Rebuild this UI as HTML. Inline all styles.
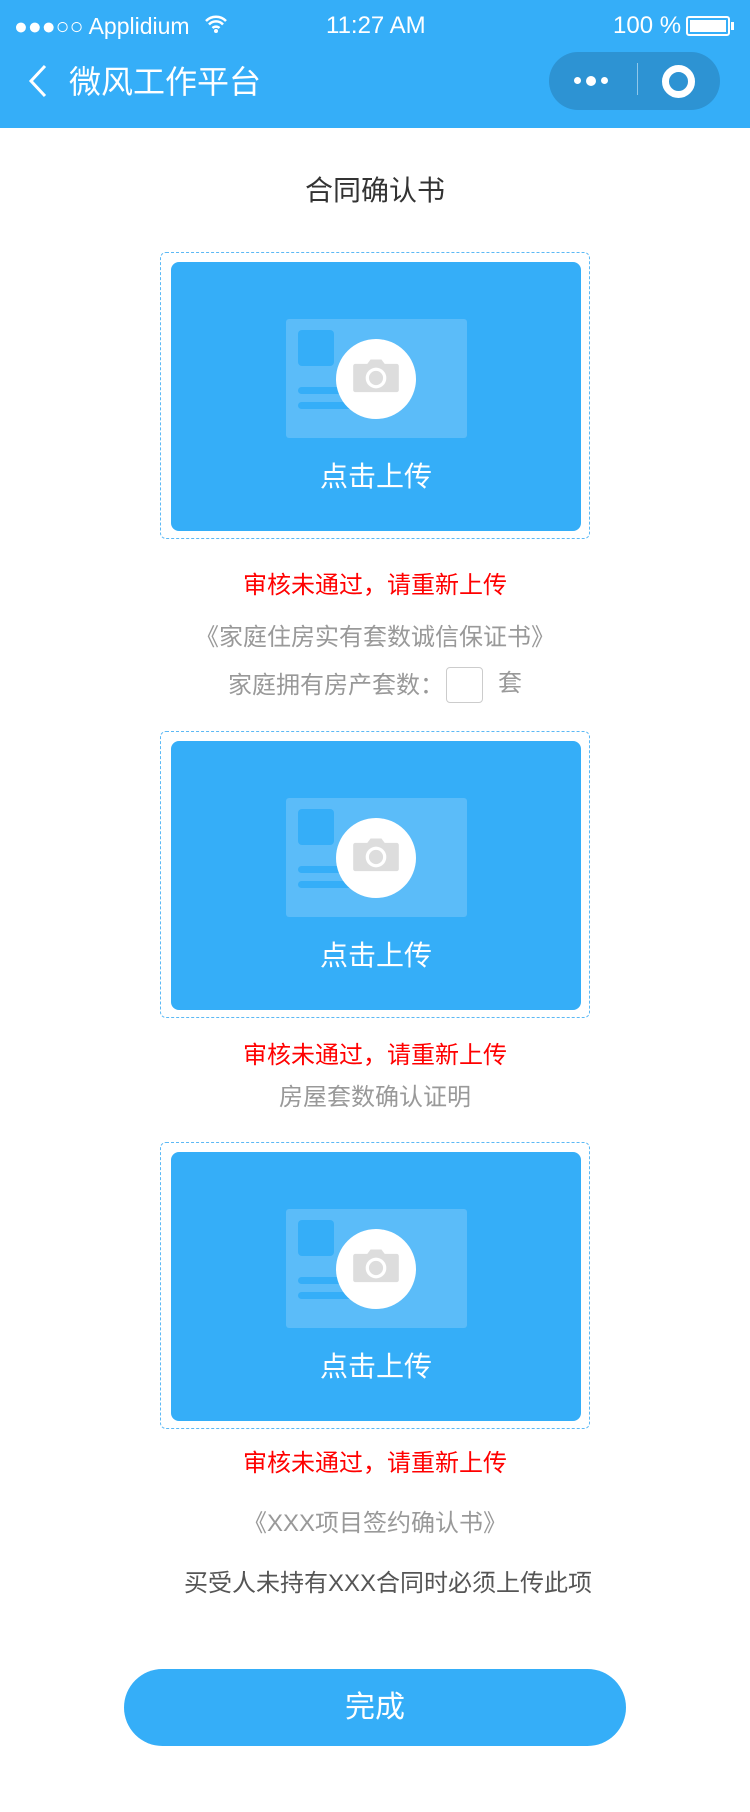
<!DOCTYPE html>
<html><head><meta charset="utf-8"><style>
*{margin:0;padding:0;box-sizing:border-box}
body{width:750px;height:1812px;background:#fff;position:relative;overflow:hidden;font-family:"Liberation Sans","Noto Sans CJK SC",sans-serif}
.abs{position:absolute}
.nav{left:0;top:0;width:750px;height:128px;background:#35aef8;color:#fff}
.c{left:0;width:750px;text-align:center;line-height:1}
.dash{left:160px;width:430px;height:287px;border:1.5px dashed #5cb9f5;border-radius:6px}
.blue{left:10px;top:9px;width:410px;height:269px;background:#35aef8;border-radius:8px}
.red{color:#f00;font-size:24px}
.gray{color:#999;font-size:24px}
</style></head><body>
<div class="abs nav">
  <div class="abs" style="left:14px;top:13px;font-size:23px;letter-spacing:0">●●●○○ Applidium</div>
  <svg class="abs" style="left:204px;top:14px" width="24" height="20" viewBox="0 0 24 20"><path d="M2 7a14 14 0 0 1 20 0M5 10.5a9.5 9.5 0 0 1 14 0M8.5 14a5 5 0 0 1 7 0" stroke="#fff" stroke-width="2.5" fill="none"/><circle cx="12" cy="17" r="2" fill="#fff"/></svg>
  <div class="abs" style="left:326px;top:12px;font-size:24px">11:27 AM</div>
  <div class="abs" style="left:613px;top:12px;font-size:24px">100 %</div>
  <div class="abs" style="left:686px;top:16px;width:44px;height:20px;border:2px solid #fff;border-radius:3px;padding:2px"><div style="background:#fff;width:100%;height:100%"></div></div>
  <div class="abs" style="left:731px;top:22px;width:3px;height:8px;background:#fff"></div>
  <svg class="abs" style="left:28px;top:64px" width="20" height="34" viewBox="0 0 20 34"><path d="M17 2L3 17l14 15" stroke="#fff" stroke-width="3" fill="none"/></svg>
  <div class="abs" style="left:69px;top:66px;font-size:32px;line-height:1">微风工作平台</div>
  <div class="abs" style="left:549px;top:52px;width:171px;height:58px;border-radius:29px;background:#2d93d3"></div>
  <div class="abs" style="left:574px;top:77px;width:7px;height:7px;border-radius:50%;background:#fff"></div>
  <div class="abs" style="left:586px;top:76px;width:10px;height:10px;border-radius:50%;background:#fff"></div>
  <div class="abs" style="left:601px;top:77px;width:7px;height:7px;border-radius:50%;background:#fff"></div>
  <div class="abs" style="left:637px;top:63px;width:1px;height:32px;background:#8fc7ea"></div>
  <div class="abs" style="left:662px;top:65px;width:33px;height:33px;border-radius:50%;border:7px solid #fff"></div>
</div>
<div class="abs c" style="top:177px;font-size:28px;color:#333">合同确认书</div>

<div class="abs dash" style="top:252px"><div class="abs blue">
  <div class="abs" style="left:115px;top:57px;width:181px;height:119px;background:#5bbcf9;border-radius:3px"></div>
  <div class="abs" style="left:127px;top:68px;width:36px;height:36px;background:#35aef8;border-radius:4px"></div>
  <div class="abs" style="left:127px;top:125px;width:60px;height:7px;background:#35aef8;border-radius:4px"></div>
  <div class="abs" style="left:127px;top:140px;width:60px;height:7px;background:#35aef8;border-radius:4px"></div>
  <div class="abs" style="left:165px;top:77px;width:80px;height:80px;background:#fff;border-radius:50%"></div>
  <svg class="abs" style="left:180px;top:91px" width="50" height="50" viewBox="0 0 46 46"><path d="M15 10l3-4h10l3 4h11a2 2 0 0 1 2 2v22a2 2 0 0 1-2 2H4a2 2 0 0 1-2-2V12a2 2 0 0 1 2-2z" fill="#ddd"/><circle cx="23" cy="23" r="9.5" fill="#fff"/><circle cx="23" cy="23" r="6.5" fill="#ddd"/></svg>
  <div class="abs" style="left:0;width:410px;text-align:center;top:201px;font-size:28px;color:#fff;line-height:1">点击上传</div>
</div></div>
<div class="abs c red" style="top:574px">审核未通过，请重新上传</div>
<div class="abs c gray" style="top:626px">《家庭住房实有套数诚信保证书》</div>
<div class="abs gray" style="left:228px;top:674px;line-height:1">家庭拥有房产套数：</div>
<div class="abs" style="left:446px;top:667px;width:37px;height:36px;border:1px solid #ccc;border-radius:4px"></div>
<div class="abs gray" style="left:498px;top:672px;line-height:1">套</div>

<div class="abs dash" style="top:731px"><div class="abs blue">
  <div class="abs" style="left:115px;top:57px;width:181px;height:119px;background:#5bbcf9;border-radius:3px"></div>
  <div class="abs" style="left:127px;top:68px;width:36px;height:36px;background:#35aef8;border-radius:4px"></div>
  <div class="abs" style="left:127px;top:125px;width:60px;height:7px;background:#35aef8;border-radius:4px"></div>
  <div class="abs" style="left:127px;top:140px;width:60px;height:7px;background:#35aef8;border-radius:4px"></div>
  <div class="abs" style="left:165px;top:77px;width:80px;height:80px;background:#fff;border-radius:50%"></div>
  <svg class="abs" style="left:180px;top:91px" width="50" height="50" viewBox="0 0 46 46"><path d="M15 10l3-4h10l3 4h11a2 2 0 0 1 2 2v22a2 2 0 0 1-2 2H4a2 2 0 0 1-2-2V12a2 2 0 0 1 2-2z" fill="#ddd"/><circle cx="23" cy="23" r="9.5" fill="#fff"/><circle cx="23" cy="23" r="6.5" fill="#ddd"/></svg>
  <div class="abs" style="left:0;width:410px;text-align:center;top:201px;font-size:28px;color:#fff;line-height:1">点击上传</div>
</div></div>
<div class="abs c red" style="top:1044px">审核未通过，请重新上传</div>
<div class="abs c gray" style="top:1086px">房屋套数确认证明</div>

<div class="abs dash" style="top:1142px"><div class="abs blue">
  <div class="abs" style="left:115px;top:57px;width:181px;height:119px;background:#5bbcf9;border-radius:3px"></div>
  <div class="abs" style="left:127px;top:68px;width:36px;height:36px;background:#35aef8;border-radius:4px"></div>
  <div class="abs" style="left:127px;top:125px;width:60px;height:7px;background:#35aef8;border-radius:4px"></div>
  <div class="abs" style="left:127px;top:140px;width:60px;height:7px;background:#35aef8;border-radius:4px"></div>
  <div class="abs" style="left:165px;top:77px;width:80px;height:80px;background:#fff;border-radius:50%"></div>
  <svg class="abs" style="left:180px;top:91px" width="50" height="50" viewBox="0 0 46 46"><path d="M15 10l3-4h10l3 4h11a2 2 0 0 1 2 2v22a2 2 0 0 1-2 2H4a2 2 0 0 1-2-2V12a2 2 0 0 1 2-2z" fill="#ddd"/><circle cx="23" cy="23" r="9.5" fill="#fff"/><circle cx="23" cy="23" r="6.5" fill="#ddd"/></svg>
  <div class="abs" style="left:0;width:410px;text-align:center;top:201px;font-size:28px;color:#fff;line-height:1">点击上传</div>
</div></div>
<div class="abs c red" style="top:1452px">审核未通过，请重新上传</div>
<div class="abs c gray" style="top:1512px">《XXX项目签约确认书》</div>
<div class="abs c" style="top:1572px;font-size:24px;color:#555;padding-left:26px">买受人未持有XXX合同时必须上传此项</div>
<div class="abs" style="left:124px;top:1669px;width:502px;height:77px;border-radius:39px;background:#35aef8;color:#fff;font-size:30px;text-align:center;line-height:77px">完成</div>
</body></html>
